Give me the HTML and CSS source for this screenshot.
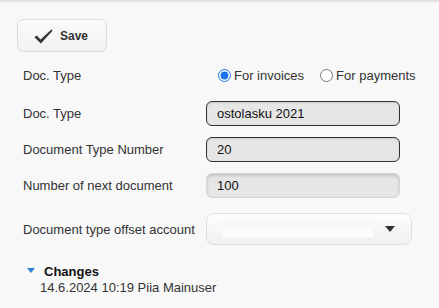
FILE: index.html
```html
<!DOCTYPE html>
<html lang="en">

<head>
    <meta charset="UTF-8" />
    <meta name="viewport" content="width=device-width, initial-scale=1.0" />
    <title>Document Type</title>
    <link rel="stylesheet" href="styles.css">
</head>

<body>
    <div class="toolbar">
        <button class="save-button">
            <svg class="check" width="19" height="15" viewBox="0 0 19 15">
                <path d="M0.5 8.2 L2.6 6.4 L6.6 10.4 L17.4 0.6 L18.6 1.8 L6.8 14.6 Z" fill="#333" />
            </svg>
            <span>Save</span>
        </button>
    </div>

    <div class="form">
        <div class="label radio-row">Doc. Type</div>
        <div class="field radio-row radios">
            <label class="radio"><input type="radio" name="doctype" checked>For invoices</label>
            <label class="radio"><input type="radio" name="doctype">For payments</label>
        </div>

        <div class="label">Doc. Type</div>
        <div class="field"><input class="text-input" type="text" value="ostolasku 2021"></div>

        <div class="label">Document Type Number</div>
        <div class="field"><input class="text-input" type="text" value="20"></div>

        <div class="label">Number of next document</div>
        <div class="field"><input class="text-input readonly" type="text" value="100" readonly></div>

        <div class="label select-row">Document type offset account</div>
        <div class="field select-row">
            <div class="select">
                <div class="select-value"></div>
                <div class="select-arrow"></div>
            </div>
        </div>
    </div>

    <div class="changes">
        <div class="changes-title"><span class="caret"></span>Changes</div>
        <div class="changes-item">14.6.2024 10:19 Piia Mainuser</div>
    </div>
</body>

</html>
```

FILE: styles.css
```css
body {
    font-family: "Liberation Sans", Arial, sans-serif;
    font-size: 13px;
    color: #333;
    background-color: #f8f8f8;
    margin: 0;
    padding: 0;
    border-top: 2px solid #e2e2e2;
    height: 306px;
}

.toolbar {
    padding: 17px 0 0 17px;
}

.save-button {
    display: flex;
    align-items: center;
    width: 90px;
    height: 33px;
    padding: 0 0 0 16px;
    background: linear-gradient(to bottom, #fbfbfb, #f1f1f1);
    border: 1px solid #dcdcdc;
    border-radius: 6px;
    font-family: "Liberation Sans", Arial, sans-serif;
    font-size: 12px;
    font-weight: bold;
    color: #333;
    cursor: pointer;
}

.save-button .check {
    margin-right: 7px;
    margin-top: 1px;
}

.form {
    display: grid;
    grid-template-columns: 183px auto;
    row-gap: 11px;
    margin-top: 11px;
    padding-left: 23px;
}

.label {
    display: flex;
    align-items: center;
    height: 25px;
}

.field {
    display: flex;
    align-items: center;
    height: 25px;
}

.radio-row {
    height: 27px;
    margin-top: -1px;
    margin-bottom: 1px;
}

.radios {
    gap: 16px;
    padding-left: 12px;
}

.radio {
    display: flex;
    align-items: center;
}

.radio input {
    width: 13px;
    height: 13px;
    margin: 0 3px 0 0;
    accent-color: #1a73e8;
}

.text-input {
    box-sizing: border-box;
    width: 194px;
    height: 25px;
    padding: 0 10px;
    border: 1px solid #333;
    border-radius: 6px;
    background: #e6e6e6;
    box-shadow: inset 0 1px 2px rgba(0, 0, 0, 0.12);
    font-family: "Liberation Sans", Arial, sans-serif;
    font-size: 13px;
    color: #111;
    outline: none;
}

.text-input.readonly {
    border: 1px solid #d6d6d6;
    box-shadow: inset 0 2px 3px rgba(0, 0, 0, 0.15);
}

.select-row {
    height: 32px;
    margin-top: 4px;
}

.select {
    box-sizing: border-box;
    display: flex;
    align-items: center;
    width: 206px;
    height: 32px;
    padding: 0 0 0 16px;
    border: 1px solid #dedede;
    border-radius: 8px;
    background: linear-gradient(to bottom, #fdfdfd, #f1f1f1);
}

.select-value {
    width: 150px;
    height: 16px;
    background: linear-gradient(to bottom, #f6f6f6, #fff);
}

.select-arrow {
    width: 0;
    height: 0;
    margin-left: 12px;
    border-left: 5px solid transparent;
    border-right: 5px solid transparent;
    border-top: 6px solid #333;
}

.changes {
    margin-top: 19px;
    padding-left: 27px;
}

.changes-title {
    display: flex;
    align-items: center;
    font-weight: bold;
    color: #111;
    line-height: 16px;
}

.caret {
    width: 0;
    height: 0;
    margin-right: 9px;
    margin-top: -4px;
    border-left: 4px solid transparent;
    border-right: 4px solid transparent;
    border-top: 5px solid #2f7fd8;
}

.changes-item {
    padding-left: 13px;
    line-height: 16px;
}
```
